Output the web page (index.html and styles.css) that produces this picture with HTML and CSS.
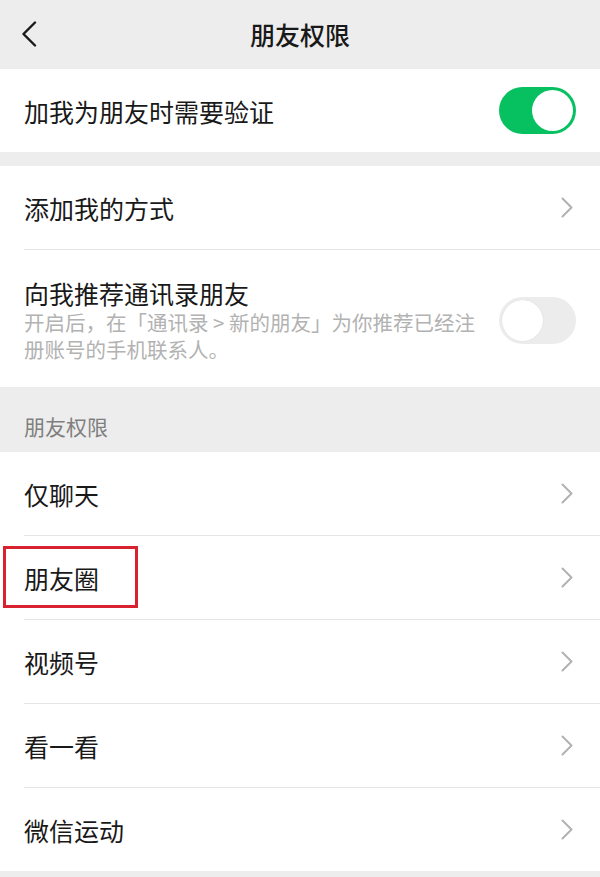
FILE: index.html
```html
<!DOCTYPE html>
<html lang="zh-CN">
<head>
<meta charset="utf-8">
<title>朋友权限</title>
<link rel="stylesheet" href="styles.css">
</head>
<body>
<div class="page">
  <header class="nav">
    <div class="nav-left">
      <svg class="back" width="16" height="26" viewBox="0 0 16 26"><path d="M14 1.5 L2.5 13 L14 24.5" fill="none" stroke="#191919" stroke-width="2.4" stroke-linecap="round" stroke-linejoin="round"/></svg>
    </div>
    <div class="nav-title">朋友权限</div>
    <div class="nav-right"></div>
  </header>

  <section class="group">
    <div class="cell">
      <div class="cell-body">
        <div class="cell-main"><div class="cell-title">加我为朋友时需要验证</div></div>
        <div class="switch on"><span class="knob"></span></div>
      </div>
    </div>
  </section>

  <section class="group gap">
    <div class="cell">
      <div class="cell-body">
        <div class="cell-main"><div class="cell-title">添加我的方式</div></div>
        <svg class="arrow" width="12" height="21" viewBox="0 0 12 21"><path d="M1.5 1.5 L10.5 10.5 L1.5 19.5" fill="none" stroke="#b2b2b2" stroke-width="2" stroke-linecap="round" stroke-linejoin="round"/></svg>
      </div>
    </div>
    <div class="cell">
      <div class="cell-body tall">
        <div class="cell-main">
          <div class="cell-title">向我推荐通讯录朋友</div>
          <div class="cell-desc">开启后，在「通讯录 &gt; 新的朋友」为你推荐已经注册账号的手机联系人。</div>
        </div>
        <div class="switch off"><span class="knob"></span></div>
      </div>
    </div>
  </section>

  <div class="section-title">朋友权限</div>

  <section class="group">
    <div class="cell">
      <div class="cell-body">
        <div class="cell-main"><div class="cell-title">仅聊天</div></div>
        <svg class="arrow" width="12" height="21" viewBox="0 0 12 21"><path d="M1.5 1.5 L10.5 10.5 L1.5 19.5" fill="none" stroke="#b2b2b2" stroke-width="2" stroke-linecap="round" stroke-linejoin="round"/></svg>
      </div>
    </div>
    <div class="cell">
      <div class="cell-body">
        <div class="cell-main"><div class="cell-title">朋友圈</div></div>
        <svg class="arrow" width="12" height="21" viewBox="0 0 12 21"><path d="M1.5 1.5 L10.5 10.5 L1.5 19.5" fill="none" stroke="#b2b2b2" stroke-width="2" stroke-linecap="round" stroke-linejoin="round"/></svg>
      </div>
      <div class="highlight"></div>
    </div>
    <div class="cell">
      <div class="cell-body">
        <div class="cell-main"><div class="cell-title">视频号</div></div>
        <svg class="arrow" width="12" height="21" viewBox="0 0 12 21"><path d="M1.5 1.5 L10.5 10.5 L1.5 19.5" fill="none" stroke="#b2b2b2" stroke-width="2" stroke-linecap="round" stroke-linejoin="round"/></svg>
      </div>
    </div>
    <div class="cell">
      <div class="cell-body">
        <div class="cell-main"><div class="cell-title">看一看</div></div>
        <svg class="arrow" width="12" height="21" viewBox="0 0 12 21"><path d="M1.5 1.5 L10.5 10.5 L1.5 19.5" fill="none" stroke="#b2b2b2" stroke-width="2" stroke-linecap="round" stroke-linejoin="round"/></svg>
      </div>
    </div>
    <div class="cell">
      <div class="cell-body">
        <div class="cell-main"><div class="cell-title">微信运动</div></div>
        <svg class="arrow" width="12" height="21" viewBox="0 0 12 21"><path d="M1.5 1.5 L10.5 10.5 L1.5 19.5" fill="none" stroke="#b2b2b2" stroke-width="2" stroke-linecap="round" stroke-linejoin="round"/></svg>
      </div>
    </div>
  </section>
</div>
</body>
</html>
```

FILE: styles.css
```css
html, body {
  margin: 0;
  padding: 0;
  background: #ededed;
}
body {
  font-family: "Noto Sans CJK SC", "Noto Sans", sans-serif;
  color: #191919;
}
.page {
  width: 600px;
  min-height: 877px;
  background: #ededed;
}
.nav {
  height: 69px;
  display: grid;
  grid-template-columns: 1fr auto 1fr;
  align-items: center;
}
.nav-left {
  padding-left: 21px;
  display: flex;
  align-items: center;
  padding-bottom: 2px;
}
.nav-title {
  font-size: 25px;
  font-weight: 500;
  line-height: 32px;
  padding-bottom: 1px;
}
.group {
  background: #fff;
}
.group.gap {
  margin-top: 14px;
}
.cell {
  padding-left: 24px;
  position: relative;
}
.cell + .cell .cell-body {
  border-top: 1px solid #e5e5e5;
}
.cell-body {
  height: 83px;
  display: flex;
  align-items: center;
  padding-right: 24px;
}
.cell-body.tall {
  height: auto;
  padding-top: 27px;
  padding-bottom: 24px;
}
.cell-main {
  flex: 1;
  min-width: 0;
}
.cell-title {
  font-size: 25px;
  line-height: 32px;
  color: #191919;
}
.cell-desc {
  font-size: 20.5px;
  line-height: 27px;
  color: #b2b2b2;
  max-width: 458px;
}
.arrow {
  display: block;
  margin-right: 3px;
}
.switch {
  width: 77px;
  height: 47px;
  border-radius: 24px;
  box-sizing: border-box;
  position: relative;
  flex: none;
  margin-left: 16px;
}
.switch.on {
  background: #07c160;
}
.switch.off {
  background: #ececec;
}
.knob {
  position: absolute;
  top: 3px;
  width: 41px;
  height: 41px;
  border-radius: 50%;
  background: #fff;
}
.switch.on .knob {
  right: 3px;
}
.switch.off .knob {
  left: 3px;
  box-shadow: 0 0 1px rgba(0,0,0,0.15);
}
.section-title {
  height: 65px;
  box-sizing: border-box;
  padding: 24px 24px 0;
  font-size: 21px;
  line-height: 30px;
  color: #7f7f7f;
}
.highlight {
  position: absolute;
  left: 3px;
  top: 11px;
  width: 135px;
  height: 62px;
  box-sizing: border-box;
  border: 3px solid #d8222f;
  pointer-events: none;
}
```
